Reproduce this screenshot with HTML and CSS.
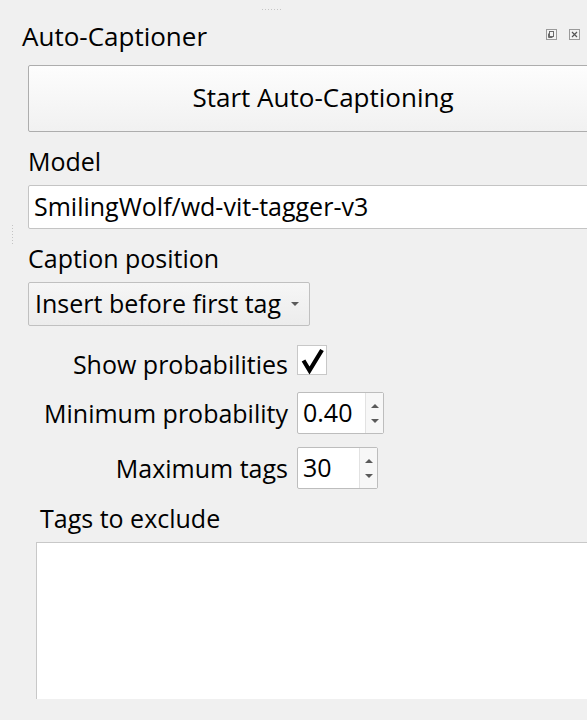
FILE: index.html
```html
<!DOCTYPE html>
<html lang="en">

<head>
  <meta charset="UTF-8">
  <meta name="viewport" content="width=device-width, initial-scale=1.0">
  <title>Auto-Captioner</title>

  <link rel="stylesheet" href="styles.css">
</head>

<body>
  <div class="dock">
    <div class="grip-top"></div>
    <div class="grip-left"></div>

    <div class="dock-title">
      <span class="dock-name">Auto-Captioner</span>
      <span class="dock-btn">
        <svg width="11" height="11" viewBox="0 0 11 11">
          <rect x="0.5" y="0.5" width="10" height="10" fill="#f3f3f3" stroke="#9a9a9a"/>
          <rect x="3.5" y="2.5" width="4" height="5" fill="none" stroke="#6a6a6a"/>
          <path d="M2.5 4.5 V8.5 H6.5" fill="none" stroke="#6a6a6a"/>
        </svg>
      </span>
      <span class="dock-btn">
        <svg width="11" height="11" viewBox="0 0 11 11">
          <rect x="0.5" y="0.5" width="10" height="10" fill="#f3f3f3" stroke="#9a9a9a"/>
          <path d="M3 3 L8 8 M8 3 L3 8" stroke="#555" stroke-width="1.2"/>
        </svg>
      </span>
    </div>

    <div class="dock-body">
      <button class="push-btn">Start Auto-Captioning</button>

      <div class="field-label">Model</div>
      <div class="line-edit">SmilingWolf/wd-vit-tagger-v3</div>

      <div class="field-label">Caption position</div>
      <div class="combo">
        <span>Insert before first tag</span>
        <span class="combo-arrow"></span>
      </div>

      <div class="options">
        <div class="form-row row-check">
          <span class="form-label">Show probabilities</span>
          <span class="check-box">
            <svg width="30" height="30" viewBox="0 0 30 30">
              <path d="M6.5 15.5 L12.5 25.5 L25 5" fill="none" stroke="#000" stroke-width="4.2" stroke-linejoin="miter" stroke-miterlimit="10"/>
            </svg>
          </span>
        </div>
        <div class="form-row row-min">
          <span class="form-label">Minimum probability</span>
          <span class="spin spin-wide">
            <span class="spin-value">0.40</span>
            <span class="spin-arrows"><i class="up"></i><i class="down"></i></span>
          </span>
        </div>
        <div class="form-row row-max">
          <span class="form-label">Maximum tags</span>
          <span class="spin spin-narrow">
            <span class="spin-value">30</span>
            <span class="spin-arrows"><i class="up"></i><i class="down"></i></span>
          </span>
        </div>

        <div class="exclude-label">Tags to exclude</div>
        <div class="text-area"></div>
      </div>
    </div>
  </div>
</body>
</html>
```

FILE: styles.css
```css
* {
	box-sizing: border-box;
}

body {
	margin: 0;
	padding: 0;
	background: #f0f0f0;
	font-family: 'Open Sans', 'Noto Sans', sans-serif;
	color: #000;
	overflow: hidden;
	width: 587px;
	height: 720px;
}

.dock {
	position: relative;
	width: 587px;
	overflow: hidden;
}

/* splitter handles */
.grip-top {
	height: 18px;
	margin-left: 262px;
	width: 20px;
	background: repeating-linear-gradient(to right, #c4c4c4 0 1px, transparent 1px 3px);
	background-size: 100% 1px;
	background-position: 0 9px;
	background-repeat: no-repeat;
}

.grip-left {
	position: absolute;
	left: 12px;
	top: 225px;
	width: 1px;
	height: 20px;
	background: repeating-linear-gradient(#c4c4c4 0 1px, transparent 1px 3px);
}

.dock-title {
	display: flex;
	align-items: center;
	height: 36px;
	padding-left: 22px;
	padding-right: 7px;
}

.dock-name {
	flex: 1;
	font-size: 26px;
	line-height: 36px;
	margin-top: -1px;
}

.dock-btn {
	display: flex;
	width: 11px;
	height: 11px;
	margin-left: 12px;
	margin-top: -4px;
}

.dock-body {
	padding: 11px 0 0 28px;
	width: 618px;
}

.push-btn {
	display: block;
	width: 100%;
	height: 67px;
	border: 1px solid #adadad;
	border-radius: 2px;
	background: linear-gradient(#fdfdfd, #f1f1f1);
	font-family: inherit;
	font-size: 26px;
	color: #000;
	padding: 0;
	padding-bottom: 3px;
}

.field-label {
	font-size: 25px;
	padding-top: 5px;
	line-height: 48px;
}

.line-edit {
	height: 44px;
	background: #fff;
	border: 1px solid #c4c4c4;
	border-radius: 2px;
	font-size: 25px;
	line-height: 40px;
	padding-left: 5px;
	white-space: nowrap;
}

.combo {
	display: flex;
	align-items: center;
	width: 282px;
	height: 44px;
	border: 1px solid #c0c0c0;
	border-radius: 2px;
	background: linear-gradient(#f6f6f6, #ececec);
	font-size: 25px;
	padding-left: 6px;
	padding-bottom: 2px;
	white-space: nowrap;
}

.combo-arrow {
	margin-left: 10px;
	border-left: 4px solid transparent;
	border-right: 4px solid transparent;
	border-top: 4px solid #5a5a5a;
	margin-top: 2px;
}

.options {
	padding-left: 8px;
}

.form-row {
	display: grid;
	grid-template-columns: 252px auto;
	column-gap: 9px;
	align-items: center;
	justify-content: start;
}

.form-label {
	text-align: right;
	font-size: 25px;
	line-height: 30px;
	white-space: nowrap;
}

.row-check {
	margin-top: 19px;
	grid-template-rows: 30px;
}

.row-check .form-label {
	align-self: start;
	padding-top: 4px;
}

.row-min {
	margin-top: 17px;
}

.row-max {
	margin-top: 13px;
}

.check-box {
	display: flex;
	width: 30px;
	height: 30px;
	background: #fff;
	border: 1px solid #c8c8c8;
}

.check-box svg {
	margin: -1px;
}

.spin {
	display: flex;
	height: 42px;
	background: #fff;
	border: 1px solid #bdbdbd;
	border-radius: 2px;
}

.spin-wide {
	width: 87px;
}

.spin-narrow {
	width: 81px;
}

.spin-value {
	flex: 1;
	font-size: 25px;
	line-height: 38px;
	padding-left: 5px;
}

.spin-arrows {
	display: flex;
	flex-direction: column;
	justify-content: space-around;
	align-items: center;
	width: 18px;
	border-left: 1px solid #e2e2e2;
	background: #f7f7f7;
	padding: 5px 0;
}

.spin-arrows i {
	display: block;
	border-left: 4px solid transparent;
	border-right: 4px solid transparent;
}

.spin-arrows .up {
	border-bottom: 4px solid #5a5a5a;
}

.spin-arrows .down {
	border-top: 4px solid #5a5a5a;
}

.exclude-label {
	font-size: 25px;
	padding-left: 4px;
	padding-top: 5px;
	line-height: 48px;
}

.text-area {
	height: 157px;
	background: #fff;
	border: 1px solid #c8c8c8;
	border-bottom: none;
}
```
